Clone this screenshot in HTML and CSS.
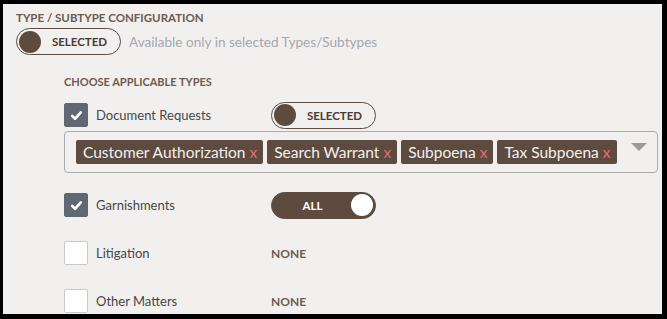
FILE: index.html
```html
<!DOCTYPE html>
<html lang="en">
<head>
    <meta charset="UTF-8">
    <title>Type / Subtype Configuration</title>
    <link rel="stylesheet" href="styles.css">
</head>
<body>
    <div class="panel">
        <h3 class="section-title">TYPE / SUBTYPE CONFIGURATION</h3>
        <div class="scope-row">
            <div class="toggle">
                <span class="knob"></span>
                <span class="toggle-text">SELECTED</span>
            </div>
            <span class="hint">Available only in selected Types/Subtypes</span>
        </div>

        <div class="types">
            <h4 class="sub-title">CHOOSE APPLICABLE TYPES</h4>

            <div class="type-row">
                <span class="check checked"><svg viewBox="0 0 12 12" width="13" height="13"><path d="M2 6.4 L4.7 9 L10 3.2" fill="none" stroke="#fff" stroke-width="2.4" stroke-linecap="round" stroke-linejoin="round"/></svg></span>
                <span class="type-name">Document Requests</span>
                <div class="toggle">
                    <span class="knob"></span>
                    <span class="toggle-text">SELECTED</span>
                </div>
            </div>

            <div class="multi-select">
                <span class="tag">Customer Authorization <span class="remove">x</span></span>
                <span class="tag">Search Warrant <span class="remove">x</span></span>
                <span class="tag">Subpoena <span class="remove">x</span></span>
                <span class="tag">Tax Subpoena <span class="remove">x</span></span>
                <span class="caret"></span>
            </div>

            <div class="type-row">
                <span class="check checked"><svg viewBox="0 0 12 12" width="13" height="13"><path d="M2 6.4 L4.7 9 L10 3.2" fill="none" stroke="#fff" stroke-width="2.4" stroke-linecap="round" stroke-linejoin="round"/></svg></span>
                <span class="type-name">Garnishments</span>
                <div class="toggle on">
                    <span class="toggle-text">ALL</span>
                    <span class="knob"></span>
                </div>
            </div>

            <div class="type-row">
                <span class="check"></span>
                <span class="type-name">Litigation</span>
                <span class="state">NONE</span>
            </div>

            <div class="type-row">
                <span class="check"></span>
                <span class="type-name">Other Matters</span>
                <span class="state">NONE</span>
            </div>
        </div>
    </div>
</body>
</html>
```

FILE: styles.css
```css
html, body {
    margin: 0;
    padding: 0;
    background-color: #000;
}

body {
    padding: 4px 5px 0 3px;
    font-family: Lato, "Open Sans", Arial, sans-serif;
}

.panel {
    height: 310px;
    overflow: hidden;
    background-color: #f1f0ef;
    padding: 6px 0 0 13px;
    box-sizing: border-box;
}

.section-title {
    margin: 0;
    font-size: 11.5px;
    line-height: 16px;
    font-weight: 700;
    color: #6e5a4e;
}

.scope-row {
    display: flex;
    align-items: center;
    margin-top: 2px;
}

.hint {
    margin-left: 8px;
    font-size: 13.6px;
    color: #a6a7ae;
}

/* pill switch */
.toggle {
    width: 105px;
    height: 27px;
    box-sizing: border-box;
    border: 1px solid #5d4b40;
    border-radius: 14px;
    display: flex;
    align-items: center;
    padding: 0 2px;
    flex-shrink: 0;
}

.knob {
    width: 22px;
    height: 22px;
    border-radius: 50%;
    background-color: #5d4b40;
    flex-shrink: 0;
}

.toggle-text {
    flex: 1;
    text-align: center;
    font-size: 11.5px;
    font-weight: 700;
    color: #4a3b33;
}

.toggle.on {
    background-color: #5d4b40;
}

.toggle.on .knob {
    background-color: #fff;
}

.toggle.on .toggle-text {
    color: #fff;
    padding-left: 0;
}

.types {
    margin-left: 48px;
    margin-right: 4px;
}

.sub-title {
    margin: 19px 0 0;
    font-size: 11px;
    line-height: 16px;
    font-weight: 700;
    color: #6e5a4e;
}

.type-row {
    display: flex;
    align-items: center;
    height: 28px;
}

.types .sub-title + .type-row {
    margin-top: 11px;
}

.check {
    width: 24px;
    height: 24px;
    box-sizing: border-box;
    border: 1px solid #c9c9c9;
    border-radius: 2px;
    background-color: #fff;
    display: flex;
    align-items: center;
    justify-content: center;
    flex-shrink: 0;
}

.check.checked {
    background-color: #5f6873;
    border-color: #5f6873;
}

.type-name {
    width: 175px;
    margin-left: 8px;
    font-size: 13px;
    color: #464646;
}

.state {
    font-size: 12px;
    font-weight: 700;
    color: #6e5a4e;
}

.multi-select {
    position: relative;
    display: flex;
    align-items: center;
    gap: 4px;
    height: 42px;
    margin: 2px 0 18px;
    padding: 0 11px;
    box-sizing: border-box;
    border: 1px solid #acacac;
    border-radius: 4px;
}

.tag {
    height: 24px;
    line-height: 24px;
    padding: 0 6px 0 7px;
    background-color: #5d4b40;
    border-radius: 2px;
    color: #f3f0ee;
    font-size: 15.5px;
    white-space: nowrap;
}

.remove {
    color: #e36d6d;
}

.caret {
    position: absolute;
    right: 10px;
    top: 11px;
    width: 0;
    height: 0;
    border-left: 8px solid transparent;
    border-right: 8px solid transparent;
    border-top: 8px solid #9a9a9a;
}

.type-row + .type-row {
    margin-top: 20px;
}
```
